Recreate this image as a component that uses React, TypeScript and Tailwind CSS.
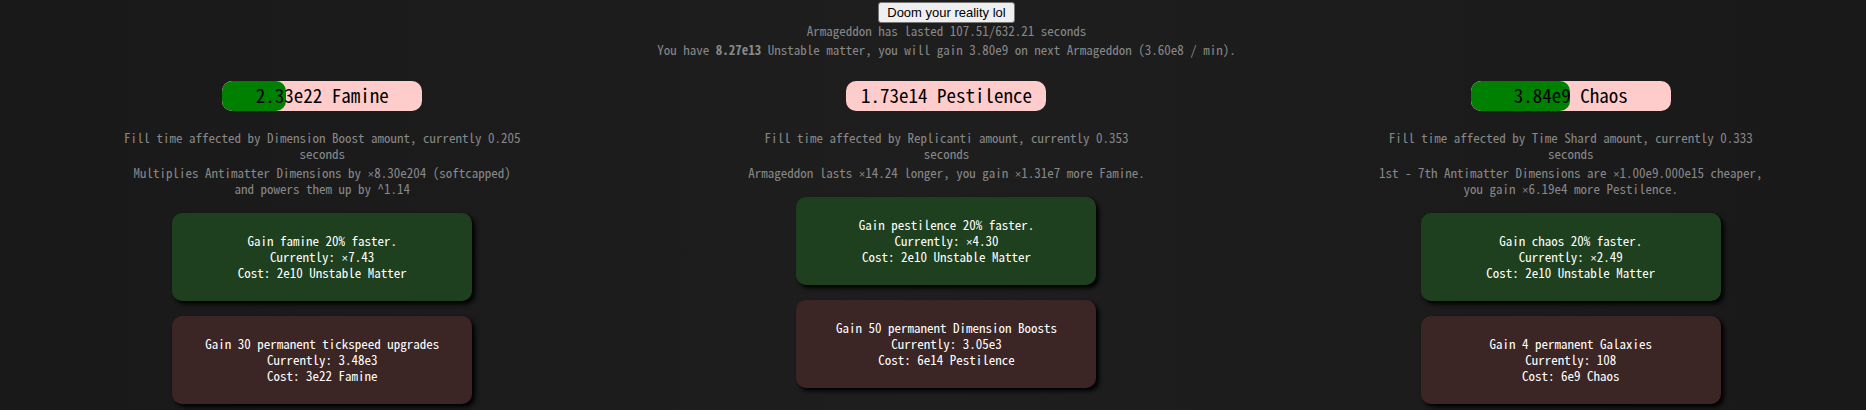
type Upgrade = { effect: string; currently: string; cost: string; affordable: boolean };

type Resource = {
  name: string;
  amount: string;
  fill: number;
  timing: string;
  effect: string;
  upgrades: Upgrade[];
};

const resources: Resource[] = [
  {
    name: "Famine",
    amount: "2.33e22",
    fill: 32,
    timing: "Fill time affected by Dimension Boost amount, currently 0.205 seconds",
    effect: "Multiplies Antimatter Dimensions by ×8.30e204 (softcapped) and powers them up by ^1.14",
    upgrades: [
      { effect: "Gain famine 20% faster.", currently: "×7.43", cost: "2e10 Unstable Matter", affordable: true },
      { effect: "Gain 30 permanent tickspeed upgrades", currently: "3.48e3", cost: "3e22 Famine", affordable: false },
    ],
  },
  {
    name: "Pestilence",
    amount: "1.73e14",
    fill: 0,
    timing: "Fill time affected by Replicanti amount, currently 0.353 seconds",
    effect: "Armageddon lasts ×14.24 longer, you gain ×1.31e7 more Famine.",
    upgrades: [
      { effect: "Gain pestilence 20% faster.", currently: "×4.30", cost: "2e10 Unstable Matter", affordable: true },
      { effect: "Gain 50 permanent Dimension Boosts", currently: "3.05e3", cost: "6e14 Pestilence", affordable: false },
    ],
  },
  {
    name: "Chaos",
    amount: "3.84e9",
    fill: 49.5,
    timing: "Fill time affected by Time Shard amount, currently 0.333 seconds",
    effect: "1st - 7th Antimatter Dimensions are ×1.00e9.000e15 cheaper, you gain ×6.19e4 more Pestilence.",
    upgrades: [
      { effect: "Gain chaos 20% faster.", currently: "×2.49", cost: "2e10 Unstable Matter", affordable: true },
      { effect: "Gain 4 permanent Galaxies", currently: "108", cost: "6e9 Chaos", affordable: false },
    ],
  },
];

// The CJK face draws × at full width, so the sign is set in a Latin monospace face.
function MathText({ text }: { text: string }) {
  return text.split(/(×)/).map((part, index) =>
    part === "×" ? (
      <span key={index} className="font-['Liberation_Mono',monospace] text-[11px] leading-none">
        ×
      </span>
    ) : (
      part
    ),
  );
}

function UpgradeButton({ upgrade }: { upgrade: Upgrade }) {
  return (
    <button
      type="button"
      className={`w-[300px] rounded-[10px] py-5 font-medium text-white shadow-[3px_3px_4px_#000] ${
        upgrade.affordable ? "bg-[#1e401e]" : "bg-[#3b2525]"
      }`}
    >
      <span className="block">{upgrade.effect}</span>
      <span className="block">
        Currently: <MathText text={upgrade.currently} />
      </span>
      <span className="block">Cost: {upgrade.cost}</span>
    </button>
  );
}

function ResourceColumn({ resource }: { resource: Resource }) {
  return (
    <section className="flex flex-col items-center gap-[15px]">
      <div className="relative mb-1 h-[30px] w-[200px] overflow-hidden rounded-[10px] bg-[#ffcccc]">
        <div className="h-full rounded-[10px] bg-[#008000]" style={{ width: `${resource.fill}%` }} />
        <h2 className="absolute inset-0 text-[19px] leading-7 font-medium text-black">
          {resource.amount} {resource.name}
        </h2>
      </div>
      <div className="mb-px flex w-[400px] flex-col gap-[3px]">
        <p>{resource.timing}</p>
        <p>
          <MathText text={resource.effect} />
        </p>
      </div>
      {resource.upgrades.map((upgrade) => (
        <UpgradeButton key={upgrade.effect} upgrade={upgrade} />
      ))}
    </section>
  );
}

export default function App() {
  return (
    <div className="min-h-screen overflow-x-clip bg-linear-to-r from-[#191919] via-[#1e1e1e] to-[#191919]">
      <main className="-mr-[17px] ml-[10px] pt-0.5 pb-1.5 text-center font-['Noto_Sans_Mono_CJK_JP','Noto_Sans_CJK_JP',monospace] text-[13px] leading-4 text-[#888888] [font-feature-settings:'hwid']">
        <header className="flex flex-col items-center gap-[3px]">
          <div className="flex flex-col items-center">
            <button
              type="button"
              className="h-[21px] rounded-[3px] border border-[#767676] bg-[#efefef] px-2 font-['Liberation_Sans',Arial,sans-serif] text-[13px] text-black"
            >
              Doom your reality lol
            </button>
            <p>Armageddon has lasted 107.51/632.21 seconds</p>
          </div>
          <p>
            You have <strong>8.27e13</strong> Unstable matter, you will gain 3.80e9 on next Armageddon (3.60e8 / min).
          </p>
        </header>
        <div className="mt-[23px] grid grid-cols-3">
          {resources.map((resource) => (
            <ResourceColumn key={resource.name} resource={resource} />
          ))}
        </div>
      </main>
    </div>
  );
}
